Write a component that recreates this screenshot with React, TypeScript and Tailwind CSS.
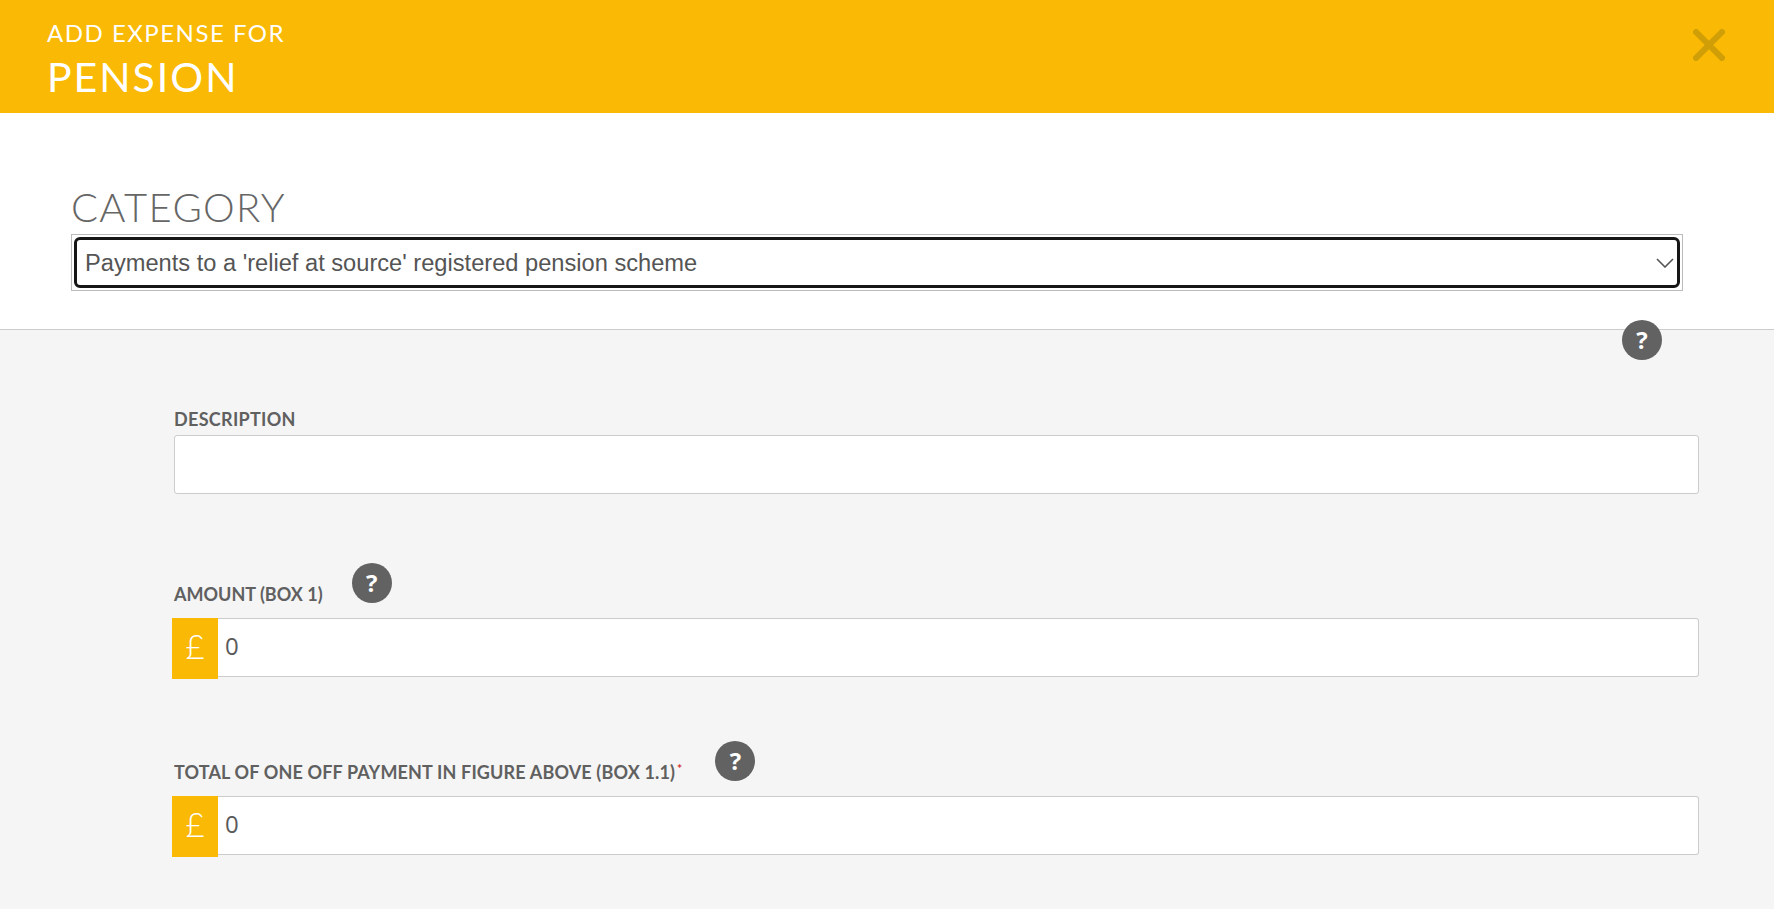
function HelpBadge({ className }: { className: string }) {
  return (
    <span
      className={`flex h-10 w-10 items-center justify-center rounded-full bg-[#626262] font-['Open_Sans',sans-serif] text-[24px] leading-none font-bold text-white ${className}`}
    >
      ?
    </span>
  );
}

function MoneyField({ value }: { value: string }) {
  return (
    <div className="flex items-start">
      <div className="flex h-[61px] w-[46px] items-center justify-center bg-[#f9b905] pb-[4px] font-['Lato',sans-serif] text-[33px] font-light text-white">
        £
      </div>
      <input
        readOnly
        defaultValue={value}
        className="h-[59px] flex-1 rounded-r-[3px] border border-l-0 border-[#cccccc] bg-white px-[7px] pb-[4px] font-['Open_Sans',sans-serif] text-[24px] text-[#5a5a5a] outline-none"
      />
    </div>
  );
}

export default function App() {
  return (
    <div className="min-h-[909px] overflow-hidden bg-[#f5f5f5] font-['Lato',sans-serif]">
      <header className="relative h-[113px] bg-[#f9b905] pt-[16px] pl-[47px] text-white">
        <div className="text-[24px] leading-[34px] font-normal tracking-[1.5px]">ADD EXPENSE FOR</div>
        <div className="mt-[3px] text-[41px] leading-[48px] font-normal tracking-[2px]">PENSION</div>
        <svg viewBox="0 0 32 32" className="absolute top-[29px] left-[1693px] h-8 w-8 text-[#d09f08]">
          <path d="M1 1 31 31M31 1 1 31" stroke="currentColor" strokeWidth="6" fill="none" />
        </svg>
      </header>

      <section className="relative h-[217px] border-b border-[#cccccc] bg-white pt-[70px] pl-[71px]">
        <h2 className="mb-[3px] pl-0 text-[40px] leading-[48px] font-light tracking-[1.3px] text-[#666666]">CATEGORY</h2>
        <div className="h-[57px] w-[1612px] border border-[#bbbbbb] p-[2px]">
          <div className="flex h-full items-center justify-between rounded-[6px] border-[3px] border-[#161616] pr-[3px] pl-[8px] font-['Liberation_Sans',sans-serif] text-[23.65px] text-[#555555]">
            <span className="pt-[2px]">Payments to a 'relief at source' registered pension scheme</span>
            <svg viewBox="0 0 18 10" className="h-[10px] w-[18px] text-[#555555]">
              <path d="M1 1 9 9 17 1" stroke="currentColor" strokeWidth="1.6" fill="none" />
            </svg>
          </div>
        </div>
        <HelpBadge className="absolute top-[207px] left-[1622px]" />
      </section>

      <main className="flex flex-col pt-[77px] pr-[75px] pl-[172px]">
        <div>
          <label className="block pl-[2px] text-[18px] leading-[24px] font-bold tracking-[0.3px] text-[#606060]">DESCRIPTION</label>
          <input
            readOnly
            className="mt-[4px] ml-[2px] h-[59px] w-[calc(100%-2px)] rounded-[3px] border border-[#cccccc] bg-white px-2 outline-none"
          />
        </div>

        <div className="mt-[68px]">
          <div className="flex h-[56px] items-end pb-[12px]">
            <label className="pl-[2px] text-[18px] leading-[24px] font-bold tracking-[0] text-[#606060]">AMOUNT (BOX 1)</label>
            <HelpBadge className="mb-[-2px] ml-[29px] -translate-y-[5px]" />
          </div>
          <MoneyField value="0" />
        </div>

        <div className="mt-[57px]">
          <div className="flex h-[60px] items-end pb-[12px]">
            <label className="pl-[2px] text-[18px] leading-[24px] font-bold tracking-[0.15px] text-[#606060]">
              TOTAL OF ONE OFF PAYMENT IN FIGURE ABOVE (BOX 1.1)
              <sup className="ml-[2px] text-[12px] text-[#d0312d]">*</sup>
            </label>
            <HelpBadge className="mb-[-2px] ml-[33px] -translate-y-[5px]" />
          </div>
          <MoneyField value="0" />
        </div>
      </main>
    </div>
  );
}
